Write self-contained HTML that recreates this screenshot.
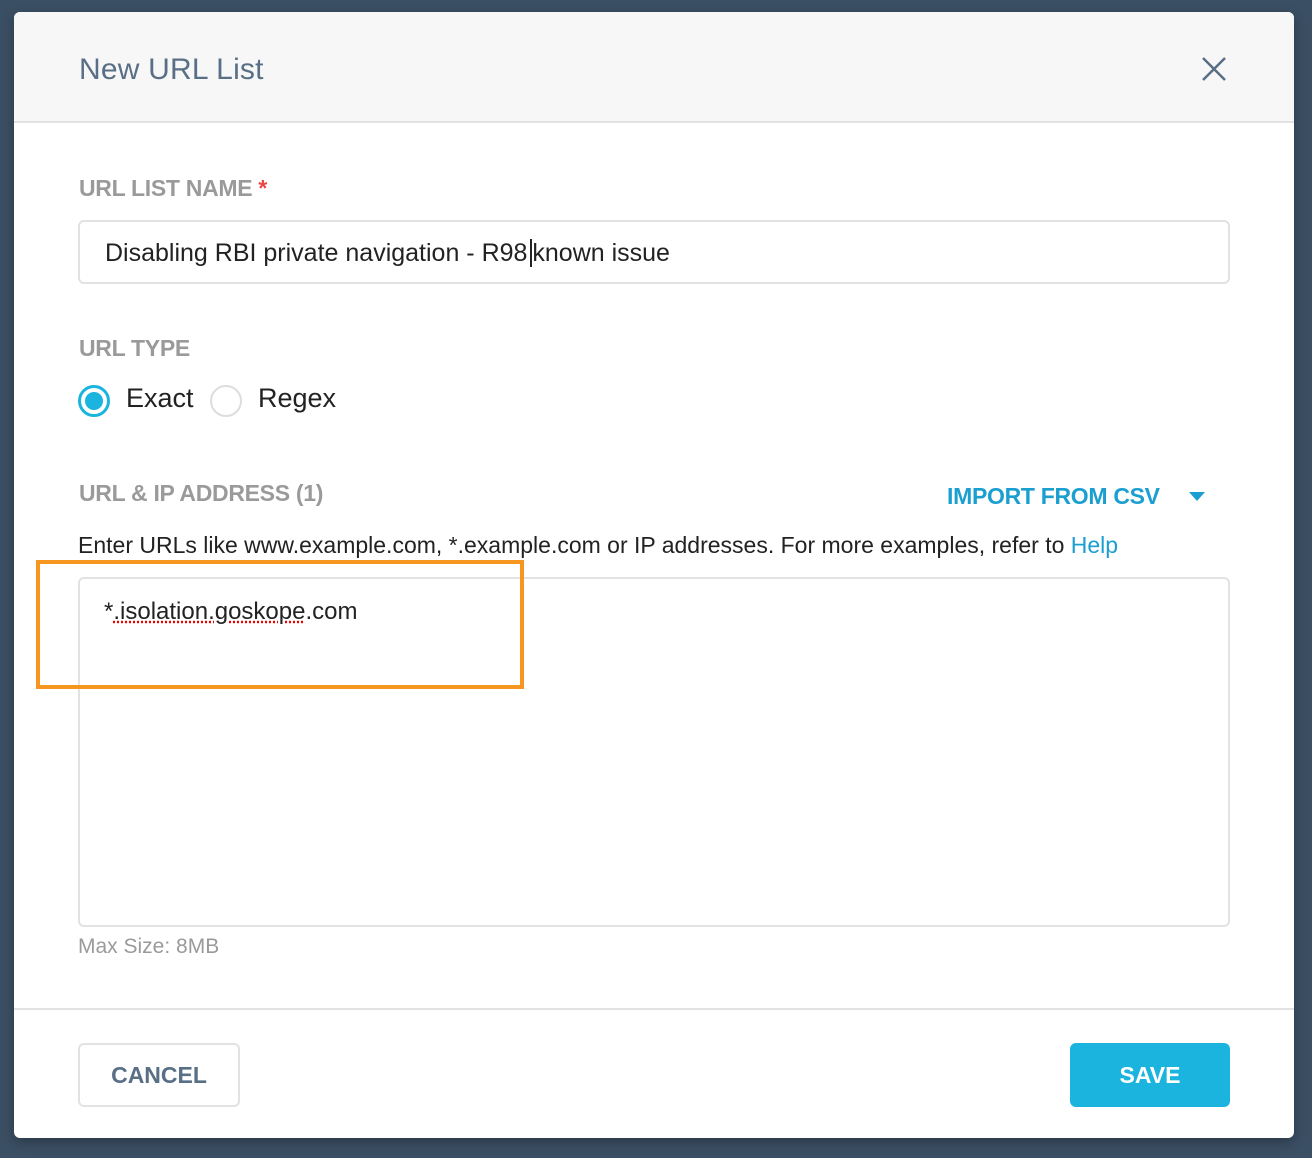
<!DOCTYPE html>
<html><head><meta charset="utf-8"><style>
*{box-sizing:border-box;margin:0;padding:0}
body{width:1312px;height:1158px;background:#3b4f64;font-family:"Liberation Sans",sans-serif;position:relative;overflow:hidden}
.modal{position:absolute;left:14px;top:12px;width:1280px;height:1126px;background:#fff;border-radius:6px;overflow:hidden;box-shadow:0 4px 12px rgba(0,0,0,.3)}
.hdr{height:111px;background:#f7f7f7;border-bottom:2px solid #e2e2e2;position:relative}
.hdr h1{position:absolute;left:65px;top:41px;font-weight:normal;font-size:30px;color:#586f85;letter-spacing:.2px}
.x{position:absolute;left:1187px;top:44px}
.lbl{position:absolute;left:65px;font-size:23px;font-weight:bold;color:#9a9a9a;letter-spacing:-.3px}
.inp{position:absolute;left:64px;width:1152px;border:2px solid #e2e2e2;border-radius:6px}
.t{position:absolute;font-size:25px;color:#222}
.radio{position:absolute;width:32px;height:32px;border-radius:50%;border:2px solid #ddd}
.radio.on{border:3px solid #1ab4de}
.radio.on::after{content:"";position:absolute;left:4px;top:4px;width:18px;height:18px;border-radius:50%;background:#1ab4de}
.ftr{position:absolute;left:0;top:996px;width:1280px;border-top:2px solid #e2e2e2}
.btn{position:absolute;top:1031px;height:64px;border-radius:6px;font-size:23px;font-weight:bold;text-align:center;line-height:64px}
</style></head><body>
<div class="modal">
<div class="hdr"><h1>New URL List</h1>
<svg class="x" width="26" height="26" viewBox="0 0 26 26"><path d="M2 2L24 24M24 2L2 24" stroke="#586f85" stroke-width="2.5"/></svg></div>
<div class="lbl" style="top:163px">URL LIST NAME <span style="color:#e44">*</span></div>
<div class="inp" style="top:208px;height:64px"></div>
<div class="t" style="left:91px;top:227px">Disabling RBI private navigation - R98 <span style="border-left:2px solid #222;margin-left:-4px"></span>known issue</div>
<div class="lbl" style="top:323px">URL TYPE</div>
<div class="radio on" style="left:64px;top:373px"></div>
<div class="t" style="left:112px;top:371px;font-size:27px">Exact</div>
<div class="radio" style="left:196px;top:373px"></div>
<div class="t" style="left:244px;top:371px;font-size:27px">Regex</div>
<div class="lbl" style="top:468px">URL &amp; IP ADDRESS (1)</div>
<div class="lbl" style="left:933px;top:471px;color:#1a9fd0">IMPORT FROM CSV</div>
<svg style="position:absolute;left:1175px;top:480px" width="16" height="10"><path d="M0 0H16L8 9Z" fill="#1a9fd0"/></svg>
<div class="t" style="left:64px;top:520px;font-size:23px">Enter URLs like www.example.com, *.example.com or IP addresses. For more examples, refer to <span style="color:#1a9fd0">Help</span></div>
<div class="inp" style="top:565px;height:350px"></div>
<div class="t" style="left:90px;top:586px;font-size:24px">*<span style="text-decoration:underline dotted #e00">.isolation.goskope</span>.com</div>
<div style="position:absolute;left:22px;top:548px;width:488px;height:129px;border:4px solid #f7961e"></div>
<div class="t" style="left:64px;top:923px;font-size:21px;color:#9a9a9a">Max Size: 8MB</div>
<div class="ftr"></div>
<div class="btn" style="left:64px;width:162px;border:2px solid #e2e2e2;color:#586f85;line-height:60px">CANCEL</div>
<div class="btn" style="left:1056px;width:160px;background:#1ab4de;color:#fff">SAVE</div>
</div>
</body></html>
